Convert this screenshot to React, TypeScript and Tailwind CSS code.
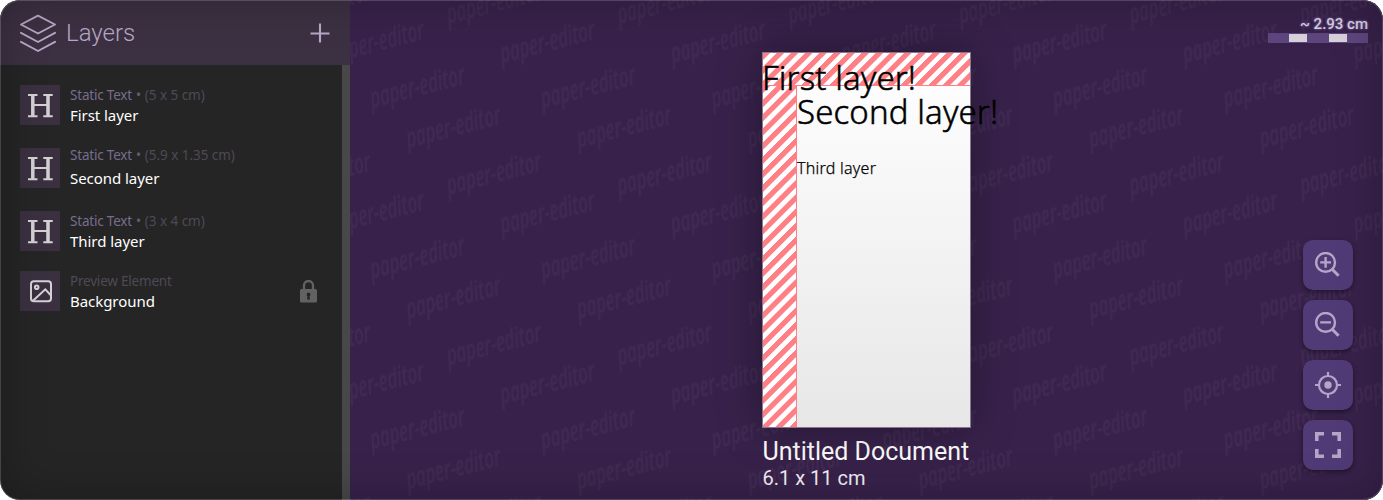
import type { ReactNode } from "react";

const TILE = 170.667;

const marks: [number, number][] = [
  [448.5, 24],
  [502, 63],
  [372, 108],
  [408, 148],
];

function Watermark() {
  return (
    <svg className="absolute inset-0 size-full">
      <defs>
        <pattern id="mark" x="-8" y="0" width={TILE} height={TILE} patternUnits="userSpaceOnUse">
          {marks.flatMap(([x, y], i) =>
            [-1, 0, 1].flatMap((a) =>
              [-1, 0, 1].map((b) => (
                <text
                  key={`${i}${a}${b}`}
                  transform={`translate(${((x - 342) % TILE) + a * TILE} ${y + b * TILE}) rotate(-14.5) skewX(-4)`}
                  textLength="97"
                  lengthAdjust="spacingAndGlyphs"
                  fontFamily="Open Sans, sans-serif"
                  fontStyle="italic"
                  fontWeight="600"
                  fontSize="28"
                  fill="#442d55"
                  opacity="0.7"
                >
                  paper-editor
                </text>
              )),
            ),
          )}
        </pattern>
      </defs>
      <rect width="100%" height="100%" fill="url(#mark)" />
    </svg>
  );
}

type ItemProps = { kind: string; size?: string; name: string; gap?: string; nameClass?: string };

function Item({ kind, size, name, gap = "", nameClass = "" }: ItemProps) {
  return (
    <div className={`flex h-10 items-center gap-[10px] ${gap}`}>
      <div className="grid size-10 shrink-0 place-items-center bg-[#3a3040]">
        {size ? (
          <svg width="28" height="28" viewBox="0 0 28 28" fill="none" stroke="#d4d1d5" strokeWidth="1.9">
            <path d="M2 4H11.5M17.3 4H26.7M2 25.3H11.5M17.3 25.3H26.7" />
            <path d="M6.8 4V25M22 4V25" strokeWidth="3.5" />
            <path d="M7 14H22" strokeWidth="2" />
          </svg>
        ) : (
          <svg width="24" height="24" viewBox="0 0 24 24" fill="none" stroke="#d4d1d5" strokeWidth="2">
            <rect x="3" y="2.3" width="20" height="20" rx="2.8" />
            <circle cx="8.7" cy="8.2" r="1.8" />
            <path d="m5 21.8 12.3-11.5 5.5 6" />
          </svg>
        )}
      </div>
      <div className="whitespace-nowrap">
        <div className="text-[13.5px] leading-5 tracking-[-0.2px] text-[#4f4955]">
          {size ? (
            <>
              <span className="text-[#786d8e]">{kind}</span>
              <span className="mx-[4px] text-[#665c76]">•</span>
              <span className="tracking-[-0.05px]">{size}</span>
            </>
          ) : (
            kind
          )}
        </div>
        <div className={`text-[15px] tracking-[-0.05px] text-white ${nameClass}`}>
          <div className="leading-5">{name}</div>
        </div>
      </div>
      {!size && (
        <svg className="mr-[25px] ml-auto" width="17" height="23" viewBox="0 0 17 23">
          <path d="M4 10V5.5a4.5 4.5 0 0 1 9 0V10" fill="none" stroke="#626262" strokeWidth="2.3" />
          <rect y="9" width="17" height="13.5" rx="1.5" fill="#626262" />
          <path d="M8.5 12.5a2 2 0 0 1 1 3.7l.5 3.3H7l.5-3.3a2 2 0 0 1 1-3.7z" fill="#252525" />
        </svg>
      )}
    </div>
  );
}

const stripe = "bg-[repeating-linear-gradient(135deg,#ff7f86_0_4.5px,#fff_5.5px_9.5px,#ff7f86_10px)]";

function Tool({ children }: { children: ReactNode }) {
  return (
    <button className="grid size-[50px] place-items-center rounded-[10px] bg-[#513b77] text-[#b7a5c8] shadow-[0_2px_5px_rgba(0,0,0,0.45)]">
      {children}
    </button>
  );
}

function Magnifier({ plus = false }: { plus?: boolean }) {
  return (
    <svg width="26" height="26" viewBox="0 0 26 26" fill="none" stroke="currentColor" strokeWidth="2.4">
      <circle cx="10.6" cy="10.4" r="9.4" />
      <path d="m17.2 17.2 6.4 6.6" strokeWidth="3" />
      <path d={plus ? "M5.2 10.4h10.8M10.6 5v10.8" : "M5.2 10.4h10.8"} />
    </svg>
  );
}

export default function App() {
  return (
    <div className="relative flex h-[500px] w-[1383px] overflow-hidden rounded-[20px] bg-[#252525] font-['Noto_Sans',sans-serif]">
      <aside className="flex w-[350px] shrink-0 flex-col">
        <header className="flex h-[65px] items-center bg-[#3c3142] px-5 text-[#b9a7c7]">
          <svg width="36" height="38" viewBox="0 0 36 38" fill="none" stroke="currentColor" strokeWidth="1.9" strokeLinejoin="round" strokeLinecap="round">
            <path d="M18 1.7 35 10.5 18 19.5 1 10.5zM1 18.8l17 9.2 17-9.2M1 27.8l17 9.2 17-9.2" />
          </svg>
          <h1 className="ml-[10px] pt-px font-['Roboto',sans-serif] text-[24px] font-[330]">Layers</h1>
          <svg className="ml-auto" width="20" height="20" viewBox="0 0 20 20" stroke="currentColor" strokeWidth="2.1">
            <path d="M10 .5v19M.5 10.5h19" />
          </svg>
        </header>
        <div className="flex grow">
          <div className="grow pt-5 pl-5">
            <Item kind="Static Text" size="(5 x 5 cm)" name="First layer" />
            <Item kind="Static Text" size="(5.9 x 1.35 cm)" name="Second layer" gap="mt-[23px]" nameClass="py-[3px]" />
            <Item kind="Static Text" size="(3 x 4 cm)" name="Third layer" gap="mt-[23px]" />
            <Item kind="Preview Element" name="Background" gap="mt-5" />
          </div>
          <div className="w-2 bg-[#484848]" />
        </div>
      </aside>
      <main className="relative flex grow bg-[#38224b]">
        <Watermark />
        <div className="relative ml-[412px] w-[209px] pt-[52px]">
          <div className="relative h-[376px] w-[209px] border border-[#85778d] bg-linear-to-b from-white to-[#e7e7e7] shadow-[0_0_40px_rgba(0,0,0,0.35)]">
            <div className={`h-[33px] border-b border-[#ff7f86] ${stripe}`} />
            <div className={`h-[341px] w-[34px] border-r border-[#ff7f86] ${stripe}`} />
            <p className="absolute top-[5px] -left-px text-[33px] leading-[40px] font-light tracking-[0.1px] whitespace-nowrap text-black [-webkit-text-stroke:0.5px_black]">First layer!</p>
            <p className="absolute top-[39px] left-[34px] text-[33px] leading-[40px] font-light tracking-[0.12px] whitespace-nowrap text-black [-webkit-text-stroke:0.5px_black]">Second layer!</p>
            <p className="absolute top-[105px] left-[34px] text-[16px] leading-5 font-light tracking-[0.25px] whitespace-nowrap text-black [-webkit-text-stroke:0.25px_black]">Third layer</p>
          </div>
          <div className="mt-[9px] pl-[0.5px] font-['Roboto',sans-serif] whitespace-nowrap text-white">
            <div className="text-[25px] leading-[30px]">Untitled Document</div>
            <div className="text-[20px] leading-[23px] text-[#f3eff5]">6.1 x 11 cm</div>
          </div>
        </div>
        <div className="relative mr-[15px] ml-auto flex flex-col items-end pt-4">
          <div className="font-['Roboto',sans-serif] text-[15px] leading-[17px] font-medium text-[#d9d2df] [text-shadow:0_0_1px_#5c457f,0_0_2px_#5c457f,0_0_2px_#5c457f,0_0_3px_#5c457f,0_0_3px_#5c457f]">~ 2.93 cm</div>
          <div className="flex h-[10px] w-[100px] gap-[22px] bg-[#5e477f] py-px pl-[21px]">
            <i className="w-[18px] bg-[#d8d2dc]" />
            <i className="w-[18px] bg-[#d8d2dc]" />
          </div>
          <div className="mt-auto mr-[15px] mb-[30px] flex flex-col gap-[10px]">
            <Tool><Magnifier plus /></Tool>
            <Tool><Magnifier /></Tool>
            <Tool>
              <svg width="26" height="26" viewBox="0 0 26 26" fill="none" stroke="currentColor" strokeWidth="2.2">
                <circle cx="13" cy="13" r="9" />
                <circle cx="13" cy="13" r="3.7" fill="currentColor" stroke="none" />
                <path d="M13 0v4M13 22v4M0 13h4M22 13h4" />
              </svg>
            </Tool>
            <Tool>
              <svg width="26" height="26" viewBox="0 0 26 26" fill="none" stroke="currentColor" strokeWidth="3.6">
                <path d="M1.8 9V1.8H9M17 1.8h7.2V9M24.2 17v7.2H17M9 24.2H1.8V17" />
              </svg>
            </Tool>
          </div>
        </div>
      </main>
      <div className="pointer-events-none absolute inset-0 rounded-[20px] border border-white/15 shadow-[inset_0_0_45px_rgba(0,0,0,0.25)]" />
    </div>
  );
}
